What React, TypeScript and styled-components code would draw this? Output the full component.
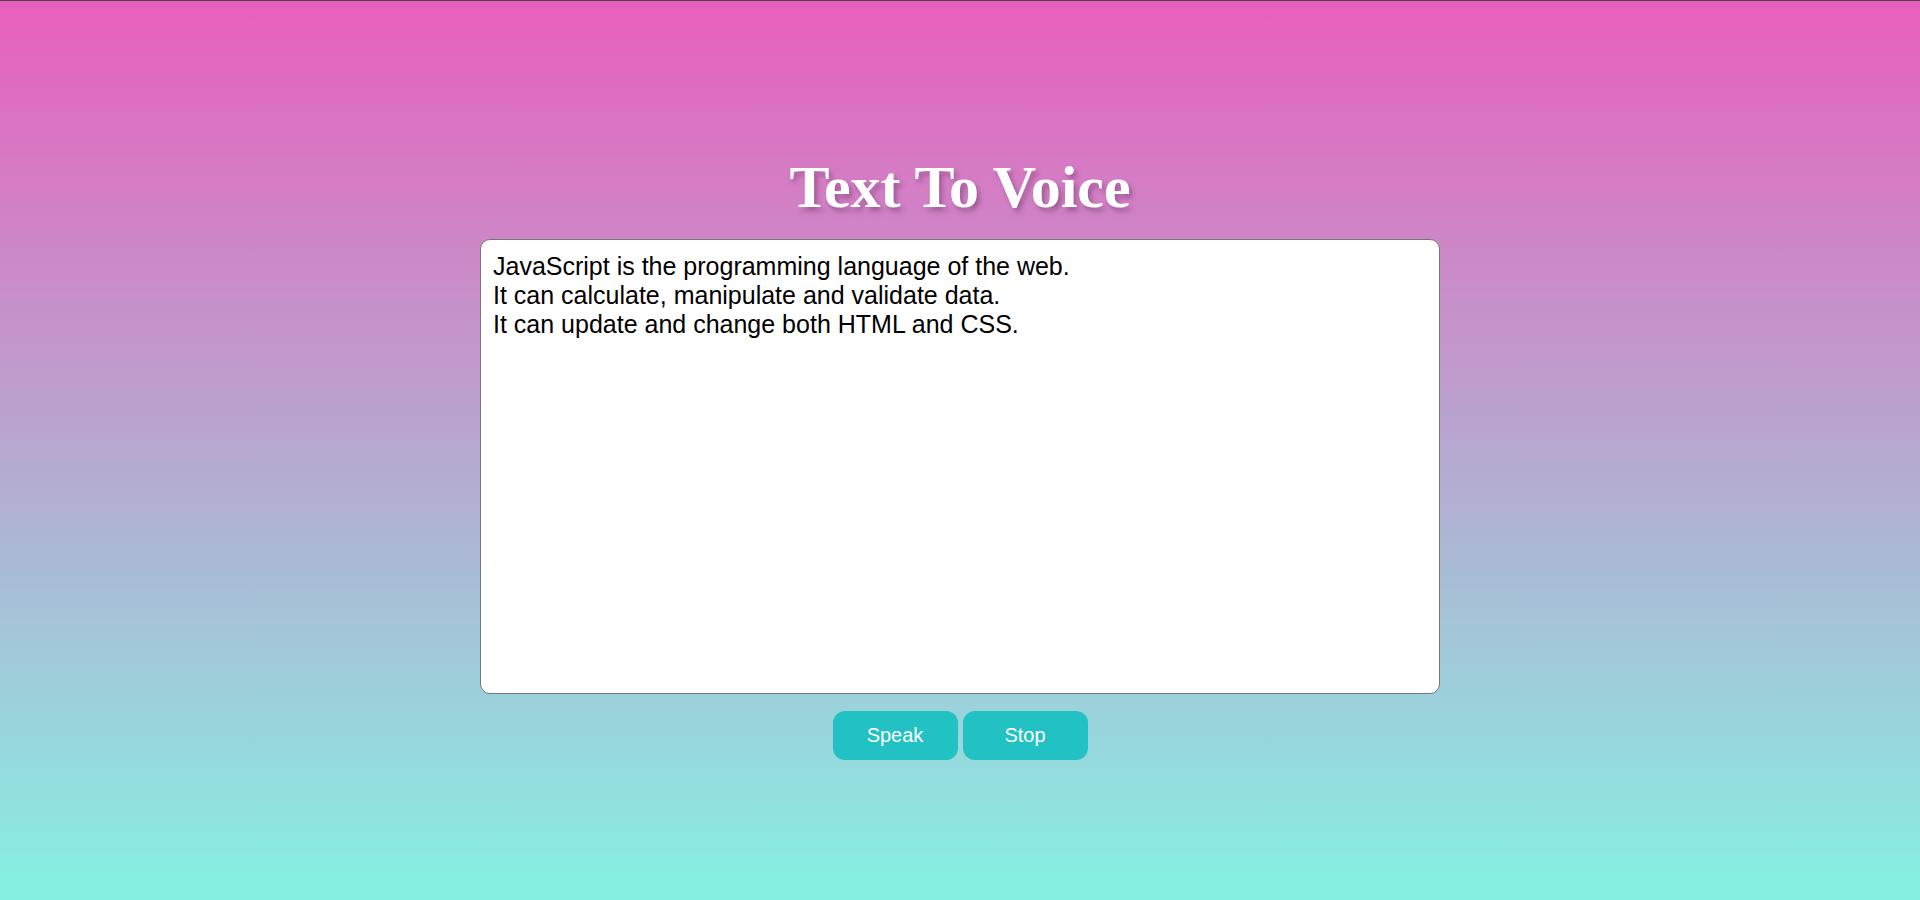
import React, { useState } from 'react';
import styled, { createGlobalStyle } from 'styled-components';

const GlobalStyle = createGlobalStyle`
  html, body {
    margin: 0;
    padding: 0;
  }
  body {
    font-family: "Liberation Sans", Arial, sans-serif;
  }
`;

const Page = styled.div`
  box-sizing: border-box;
  min-height: 900px;
  border-top: 1px solid #444;
  background: linear-gradient(180deg, #e85fbd 0%, #86f1e3 100%);
  display: flex;
  flex-direction: column;
  align-items: center;
  padding-top: 154px;
`;

const Title = styled.h1`
  margin: 0 0 20px;
  font-family: "Liberation Serif", "Times New Roman", serif;
  font-size: 60px;
  line-height: 64px;
  font-weight: bold;
  color: #fff;
  text-shadow: 3px 4px 5px rgba(60, 30, 60, 0.35);
`;

const TextBox = styled.textarea`
  box-sizing: border-box;
  width: 960px;
  height: 455px;
  padding: 12px;
  border: 1px solid #767676;
  border-radius: 10px;
  background: #fff;
  color: #000;
  font-family: "Liberation Sans", Arial, sans-serif;
  font-size: 25px;
  resize: none;
  outline: none;
`;

const ButtonRow = styled.div`
  display: flex;
  gap: 5px;
  margin-top: 17px;
`;

const ActionButton = styled.button`
  width: 125px;
  height: 49px;
  border: none;
  border-radius: 12px;
  background: #22c1c3;
  color: #fff;
  font-family: "Liberation Sans", Arial, sans-serif;
  font-size: 20px;
  cursor: pointer;
`;

const initialText = `JavaScript is the programming language of the web.
It can calculate, manipulate and validate data.
It can update and change both HTML and CSS.`;

const App = () => {
  const [text, setText] = useState(initialText);

  const handleSpeak = () => {
    if (typeof window !== 'undefined' && 'speechSynthesis' in window) {
      window.speechSynthesis.speak(new SpeechSynthesisUtterance(text));
    }
  };

  const handleStop = () => {
    if (typeof window !== 'undefined' && 'speechSynthesis' in window) {
      window.speechSynthesis.cancel();
    }
  };

  return (
    <>
      <GlobalStyle />
      <Page>
        <Title>Text To Voice</Title>
        <TextBox value={text} onChange={(e) => setText(e.target.value)} />
        <ButtonRow>
          <ActionButton type="button" onClick={handleSpeak}>Speak</ActionButton>
          <ActionButton type="button" onClick={handleStop}>Stop</ActionButton>
        </ButtonRow>
      </Page>
    </>
  );
};

export default App;
